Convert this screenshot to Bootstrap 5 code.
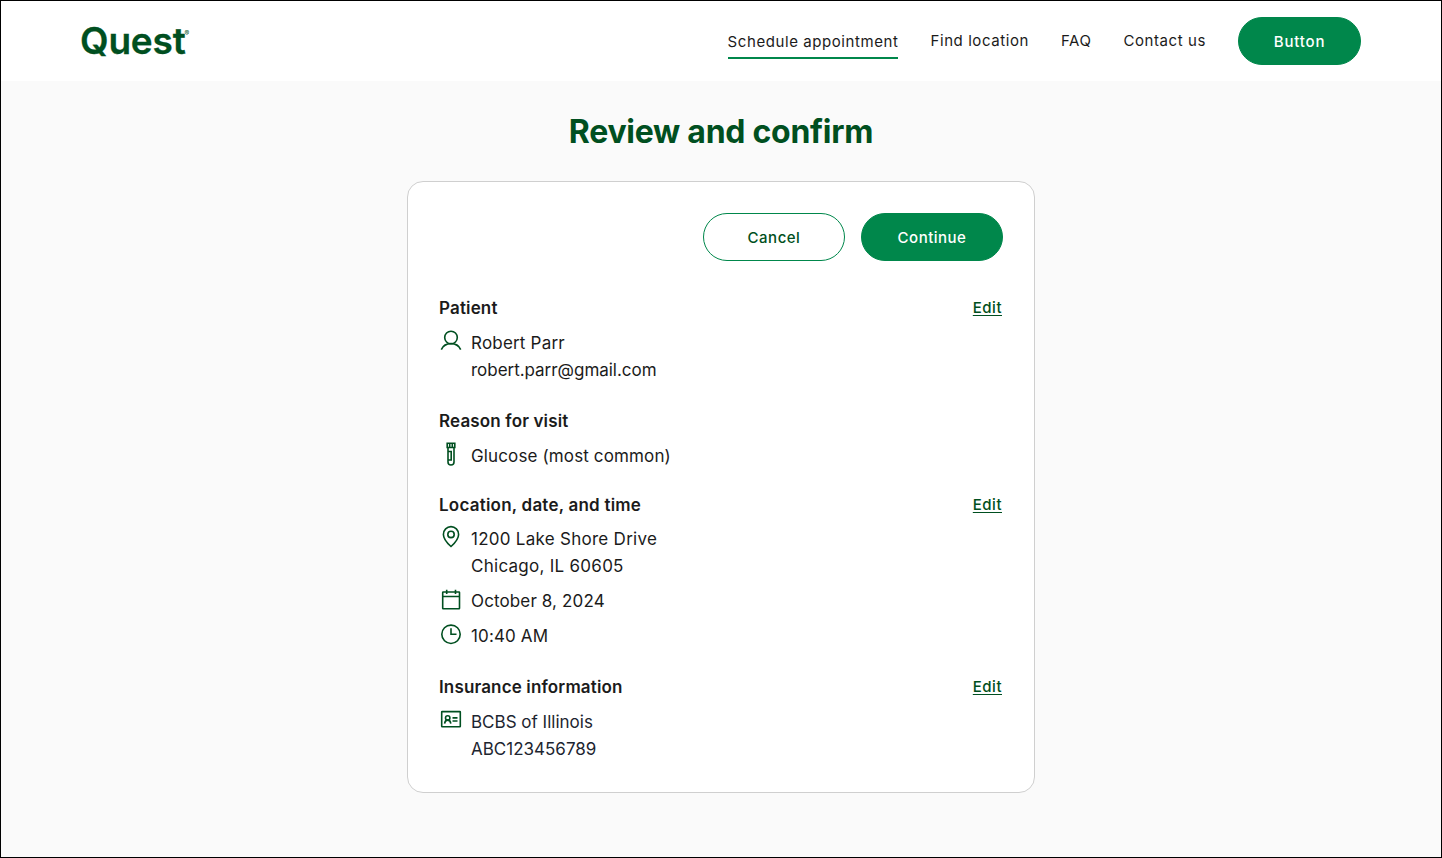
<!DOCTYPE html>
<html lang="en">
<head>
<meta charset="utf-8">
<meta name="viewport" content="width=device-width, initial-scale=1">
<title>Quest – Review and confirm</title>
<link href="https://cdn.jsdelivr.net/npm/bootstrap@5.3.0/dist/css/bootstrap.min.css" rel="stylesheet">
<style>
  :root { --forest: #004f20; --leaf: #00874b; --ink: #1b1b1b; }
  body { font-family: Inter, "Liberation Sans", sans-serif; font-size: 17px; line-height: 27px; color: var(--ink); background: #fafafa; border: 1px solid #000; height: 100vh; overflow: hidden; }
  .site-bar { height: 80px; padding: 0 80px 0 79px; }
  .brand-word { font-size: 37px; font-weight: 600; line-height: 48px; letter-spacing: -.2px; color: var(--forest); -webkit-text-stroke: .3px var(--forest); }
  .brand-word sup { font-size: 7px; font-weight: 400; top: -18px; margin-left: -1px; -webkit-text-stroke: 0; }
  .site-menu { gap: 32px; font-size: 15px; line-height: 24px; }
  .site-menu .nav-link { padding: 0; color: var(--ink); letter-spacing: .58px; }
  .site-menu .nav-link.active { padding-top: 4px; padding-bottom: 3px; box-shadow: 0 2px 0 var(--leaf); }
  .btn-pill { height: 48px; width: 142px; border-radius: 24px; font-size: 15px; font-weight: 500; letter-spacing: .5px; padding: 2px 0 0; }
  .btn-leaf, .btn-leaf:hover { background: var(--leaf); color: #fff; border-color: var(--leaf); }
  .btn-line, .btn-line:hover { background: #fff; color: var(--forest); border-color: var(--leaf); }
  .btn-top { width: 123px; letter-spacing: .8px; }
  .page-title { font-size: 32px; line-height: 40px; font-weight: 700; letter-spacing: -.27px; color: var(--forest); margin: 31px 0 29px; }
  .review-card { width: 628px; height: 612px; border: 1px solid #cfcfcf; border-radius: 16px; padding: 31px; }
  .card-actions { margin-bottom: 34px; }
  .review-card h2 { font-size: 17px; line-height: 27px; font-weight: 600; letter-spacing: .15px; margin: 0; }
  .review-card section { margin-bottom: 24px; }
  .review-card .visit-reason { margin-bottom: 22px; }
  .entry { margin-top: 8px; gap: 8px; letter-spacing: .13px; }
  .entry svg { width: 24px; height: 24px; margin-top: -1px; flex: none; fill: none; stroke: var(--forest); stroke-width: 1.6; }
  .contact-name { letter-spacing: .2px; }
  .contact-mail { letter-spacing: -.03px; }
  .place-heading h2 { letter-spacing: .22px; }
  .place-entry { margin-top: 7px; letter-spacing: .27px; }
  .insurance-entry { color: #1d2530; letter-spacing: 0; }
  .edit-link { font-size: 15px; font-weight: 500; line-height: 25px; letter-spacing: .5px; color: var(--forest); text-underline-offset: 2px; margin-right: 1px; }
</style>
</head>
<body>
<header class="site-bar bg-white d-flex align-items-center justify-content-between">
  <a class="brand-word text-decoration-none" href="#">Quest<sup>®</sup></a>
  <nav class="nav site-menu align-items-center">
    <a class="nav-link active" href="#">Schedule appointment</a>
    <a class="nav-link" href="#">Find location</a>
    <a class="nav-link" href="#">FAQ</a>
    <a class="nav-link" href="#">Contact us</a>
    <button class="btn btn-pill btn-leaf btn-top">Button</button>
  </nav>
</header>
<main class="d-flex flex-column align-items-center">
  <h1 class="page-title">Review and confirm</h1>
  <div class="review-card bg-white">
    <div class="card-actions d-flex justify-content-end gap-3">
      <button class="btn btn-pill btn-line">Cancel</button>
      <button class="btn btn-pill btn-leaf">Continue</button>
    </div>
    <section>
      <div class="d-flex justify-content-between"><h2>Patient</h2><a class="edit-link" href="#">Edit</a></div>
      <div class="entry d-flex">
        <svg viewBox="0 0 24 24"><circle cx="12" cy="8.500" r="6.300"/><path d="M2.300 20.600c1.600-3.700 5.300-6 9.700-6s8.100 2.300 9.700 6"/></svg>
        <div><div class="contact-name">Robert Parr</div><div class="contact-mail">robert.parr@gmail.com</div></div>
      </div>
    </section>
    <section class="visit-reason">
      <h2>Reason for visit</h2>
      <div class="entry d-flex">
        <svg viewBox="0 0 24 24"><path d="M8.200 1.200h7.600v4.300H8.200z"/><path d="M10.700 1v4.500M13.300 1v4.500M9 5.500V20a3 3 0 0 0 6 0V5.500M9 9.500h3.200v8.500H9"/></svg>
        <div>Glucose (most common)</div>
      </div>
    </section>
    <section>
      <div class="place-heading d-flex justify-content-between"><h2>Location, date, and time</h2><a class="edit-link" href="#">Edit</a></div>
      <div class="entry place-entry d-flex">
        <svg viewBox="0 0 24 24"><path d="M12 21.500c-4.600-4.200-7.600-8.300-7.600-12.100a7.600 7.800 0 0 1 15.200 0c0 3.800-3 7.900-7.600 12.100z"/><circle cx="12" cy="9.400" r="3.200"/></svg>
        <div>1200 Lake Shore Drive<br>Chicago, IL 60605</div>
      </div>
      <div class="entry d-flex">
        <svg viewBox="0 0 24 24"><rect x="3.700" y="5" width="16.800" height="16.700" rx=".5"/><path d="M3.700 9.500h16.800M7.700 2.700v4.300M16.500 2.700v4.300"/></svg>
        <div>October 8, 2024</div>
      </div>
      <div class="entry d-flex">
        <svg viewBox="0 0 24 24"><circle cx="12" cy="12.300" r="9.200"/><path d="M12 6.300v6h5.500"/></svg>
        <div>10:40 AM</div>
      </div>
    </section>
    <section>
      <div class="d-flex justify-content-between"><h2>Insurance information</h2><a class="edit-link" href="#">Edit</a></div>
      <div class="entry insurance-entry d-flex">
        <svg viewBox="0 0 24 24"><rect x="2.700" y="3.600" width="18.600" height="15.200" rx=".5"/><circle cx="8.700" cy="9.900" r="2.200"/><path d="M5.600 15.600c.2-2.300 1.300-3.500 3.100-3.500s2.900 1.200 3.100 3.500M13.500 9.900h5M13.500 13h5"/></svg>
        <div>BCBS of Illinois<br>ABC123456789</div>
      </div>
    </section>
  </div>
</main>
<script src="https://cdn.jsdelivr.net/npm/bootstrap@5.3.0/dist/js/bootstrap.bundle.min.js"></script>
</body>
</html>
